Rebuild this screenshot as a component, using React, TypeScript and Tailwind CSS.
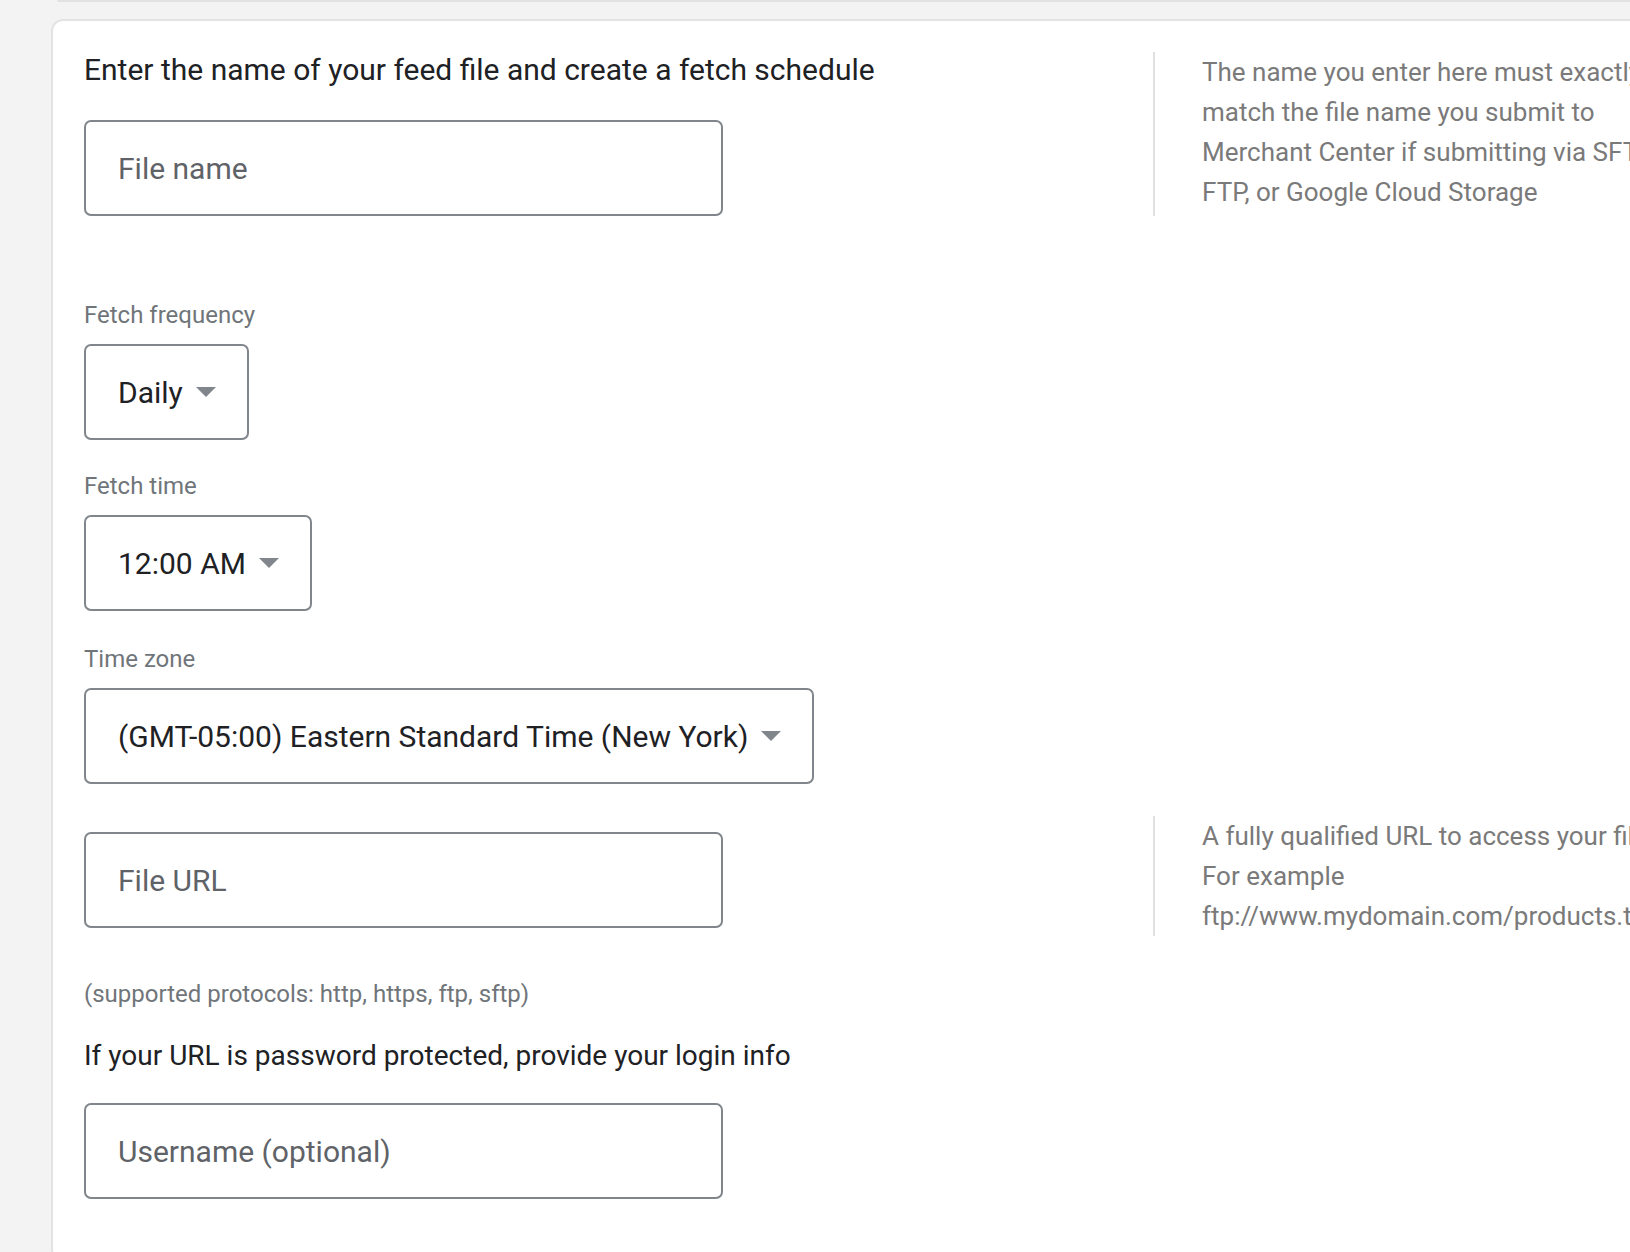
import { ReactNode } from 'react'

function Arrow() {
  return (
    <svg width="20" height="10" viewBox="0 0 20 10" className="shrink-0">
      <path d="M0 0h20L10 10z" fill="#80868b" />
    </svg>
  )
}

function TextBox({ placeholder }: { placeholder: string }) {
  return (
    <div className="flex h-[96px] w-[639px] items-center rounded-[7px] border-2 border-[#80868b] bg-white pl-[32px] text-[30px] text-[#5f6368]">
      {placeholder}
    </div>
  )
}

function SelectBox({ value }: { value: string }) {
  return (
    <div className="flex h-[96px] w-fit items-center gap-[13px] rounded-[7px] border-2 border-[#80868b] bg-white pl-[32px] pr-[31px] text-[30px] text-[#202124]">
      <span>{value}</span>
      <Arrow />
    </div>
  )
}

function Label({ children }: { children: ReactNode }) {
  return <div className="text-[24px] leading-[28px] text-[#70757a]">{children}</div>
}

function Help({ children }: { children: ReactNode }) {
  return (
    <div className="border-l-2 border-[#e0e0e0] pl-[47px] text-[26px] leading-[40px] text-[#7a7a7a] whitespace-nowrap">
      {children}
    </div>
  )
}

export default function App() {
  return (
    <div className="h-[1252px] w-[1630px] overflow-hidden bg-[#f3f3f3] font-['Roboto',sans-serif]">
      <div className="ml-[57px] h-[2px] w-[1700px] rounded-bl-[8px] bg-[#e2e2e2]" />
      <div className="ml-[51px] mt-[17px] w-[1800px] rounded-[12px] border-2 border-[#e3e3e3] bg-white pl-[31px] pt-[31px] pb-[60px]">
        {/* file name + schedule */}
        <div className="flex">
          <div className="w-[1069px]">
            <div className="text-[30px] leading-[36px] text-[#202124]">
              Enter the name of your feed file and create a fetch schedule
            </div>
            <div className="mt-[32px]">
              <TextBox placeholder="File name" />
            </div>
          </div>
          <Help>
            The name you enter here must exactly
            <br />
            match the file name you submit to
            <br />
            Merchant Center if submitting via SFTP,
            <br />
            FTP, or Google Cloud Storage
          </Help>
        </div>

        <div className="mt-[85px]">
          <Label>Fetch frequency</Label>
          <div className="mt-[15px]">
            <SelectBox value="Daily" />
          </div>
        </div>

        <div className="mt-[32px]">
          <Label>Fetch time</Label>
          <div className="mt-[15px]">
            <SelectBox value="12:00 AM" />
          </div>
        </div>

        <div className="mt-[34px]">
          <Label>Time zone</Label>
          <div className="mt-[15px]">
            <SelectBox value="(GMT-05:00) Eastern Standard Time (New York)" />
          </div>
        </div>

        {/* file url */}
        <div className="mt-[32px] flex">
          <div className="w-[1069px] pt-[16px]">
            <TextBox placeholder="File URL" />
          </div>
          <Help>
            A fully qualified URL to access your file.
            <br />
            For example
            <br />
            ftp://www.mydomain.com/products.txt
          </Help>
        </div>

        <div className="mt-[44px] text-[24px] leading-[28px] text-[#70757a]">
          (supported protocols: http, https, ftp, sftp)
        </div>
        <div className="mt-[30px] text-[28px] leading-[36px] text-[#202124]">
          If your URL is password protected, provide your login info
        </div>
        <div className="mt-[29px]">
          <TextBox placeholder="Username (optional)" />
        </div>
      </div>
    </div>
  )
}
